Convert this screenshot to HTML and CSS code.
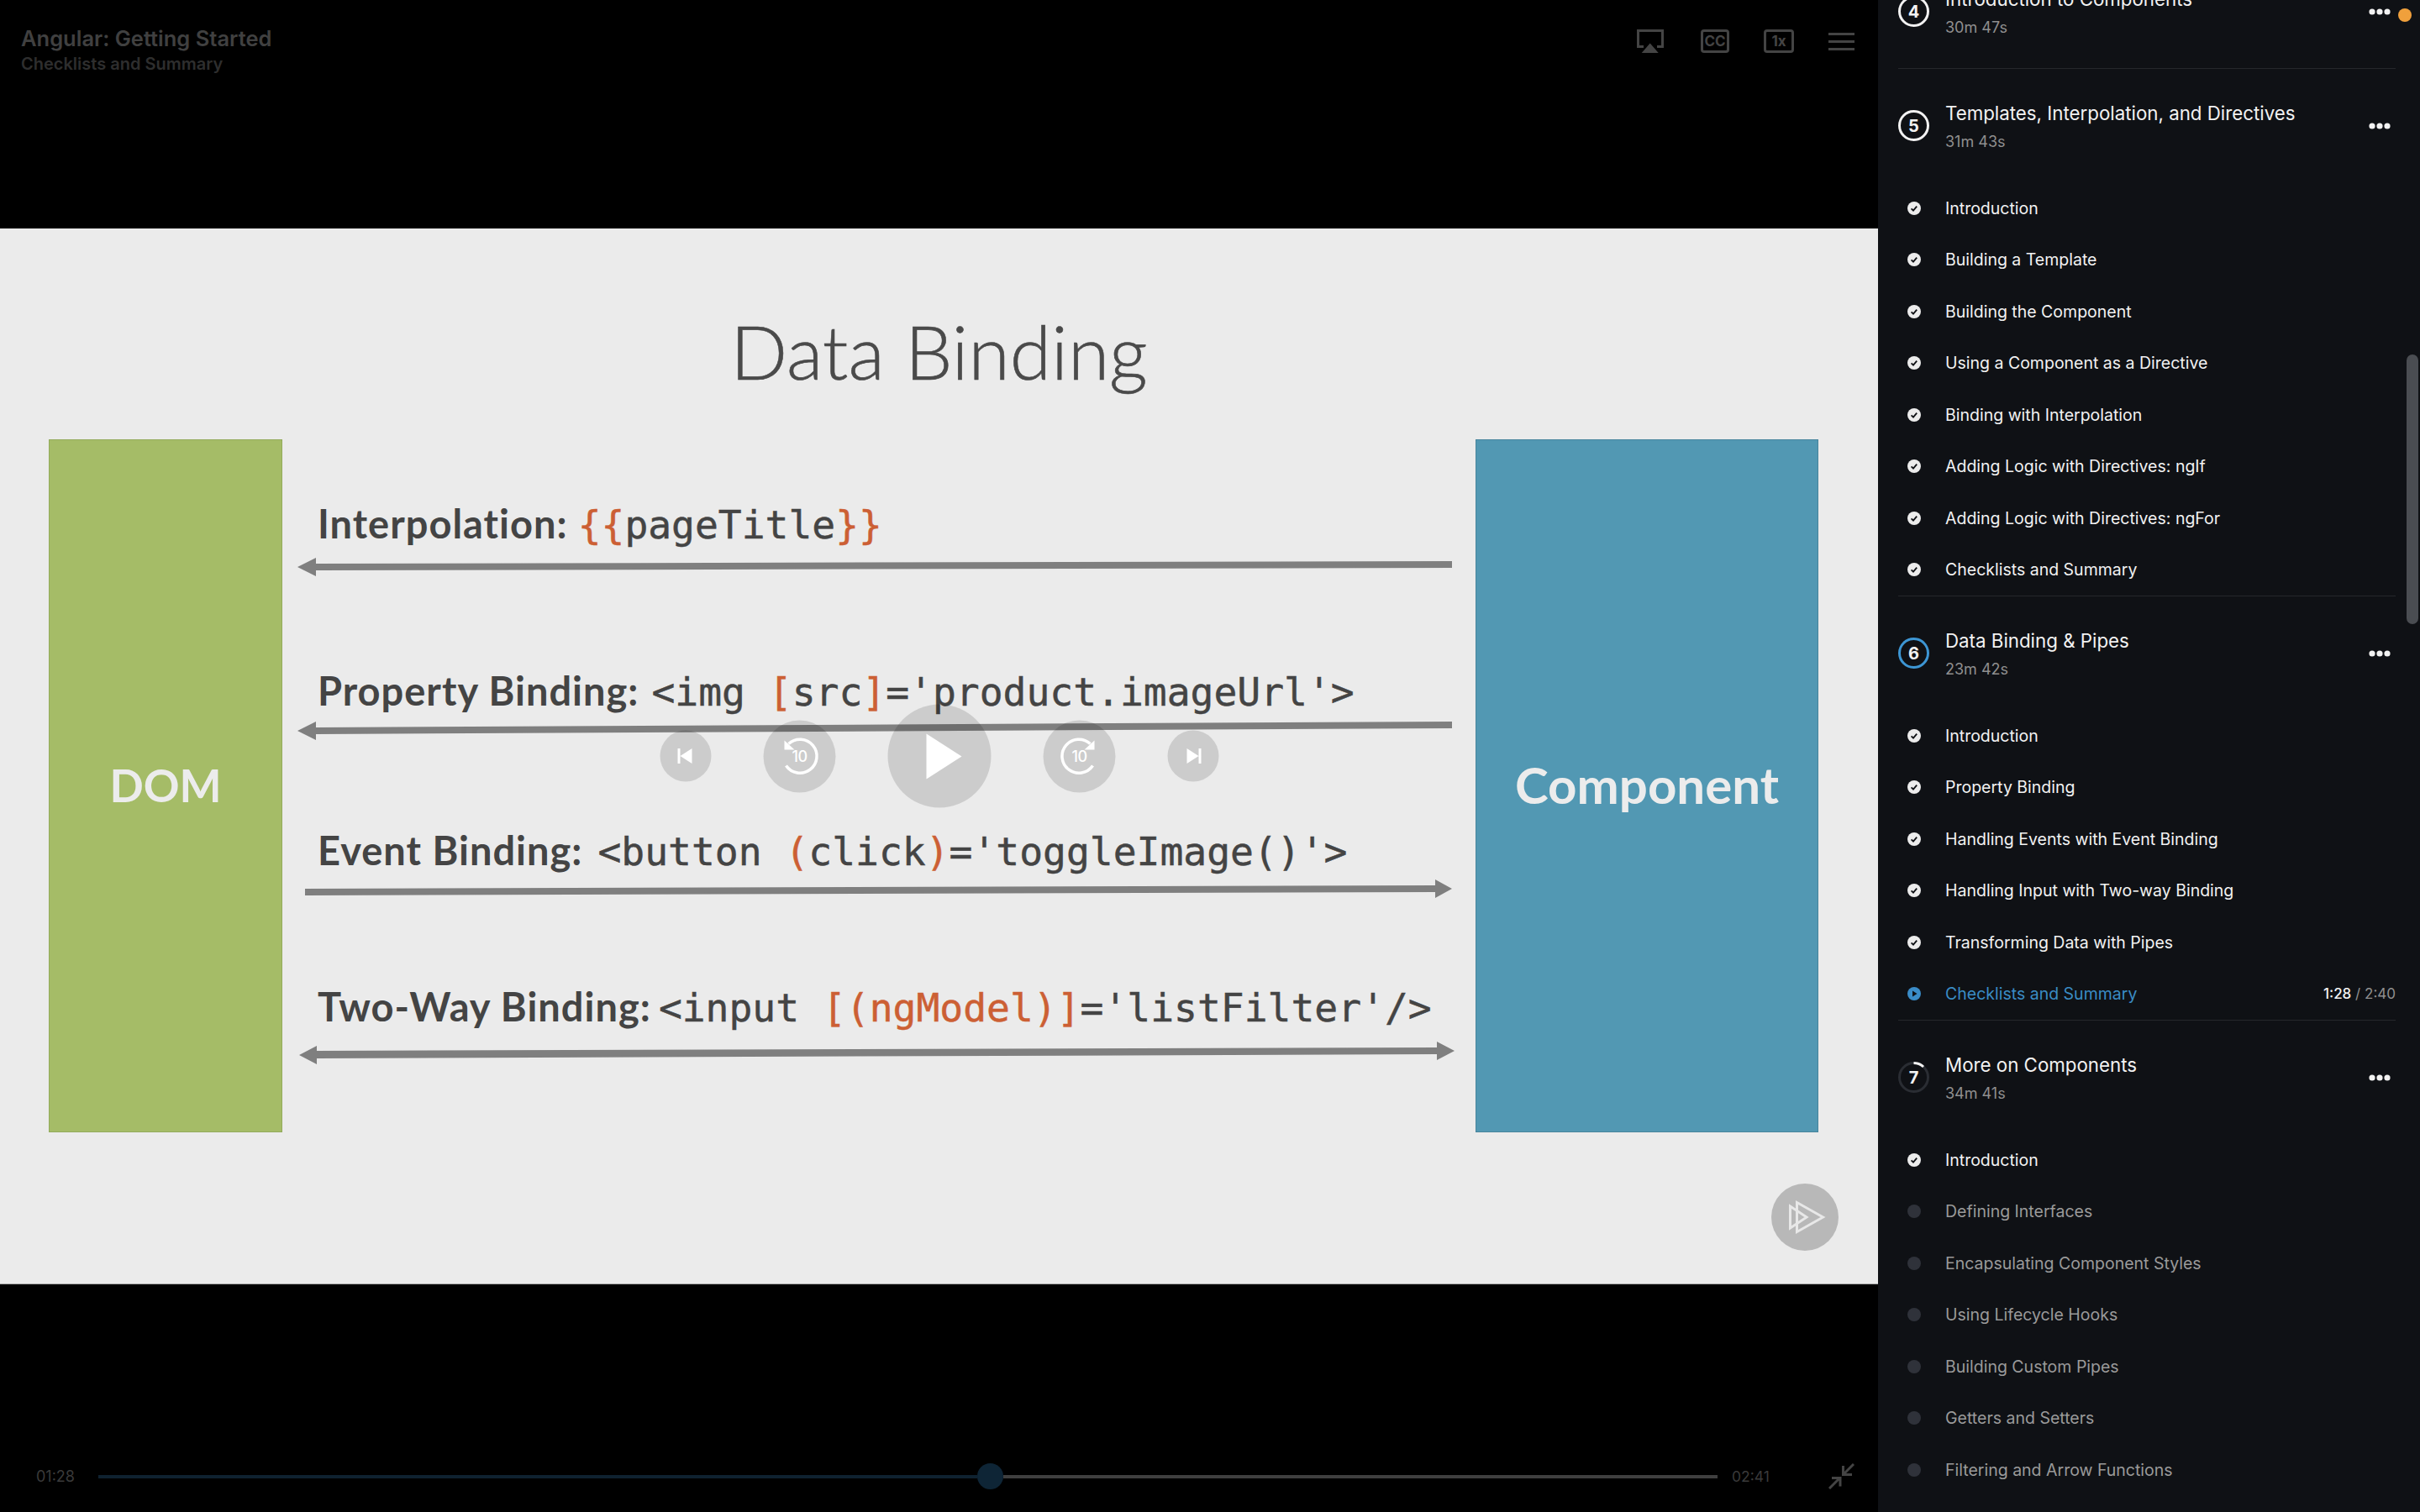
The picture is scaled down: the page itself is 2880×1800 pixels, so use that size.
FILE: index.html
```html
<!DOCTYPE html>
<html lang="en">
  <head>
    <meta charset="UTF-8" />
    <title>Angular: Getting Started</title>
    <link rel="stylesheet" href="styles.css">
  </head>
  <body>
    <svg class="defs" width="0" height="0">
      <symbol id="check" viewBox="0 0 16 16">
        <circle cx="8" cy="8" r="8" fill="#ececec" />
        <path d="M4.6 8.3l2.4 2.4 4.2-5" fill="none" stroke="#0f1115" stroke-width="1.8" />
      </symbol>
      <symbol id="more" viewBox="0 0 26 8">
        <circle cx="4" cy="4" r="3.6" fill="#f2f2f2" />
        <circle cx="13" cy="4" r="3.6" fill="#f2f2f2" />
        <circle cx="22" cy="4" r="3.6" fill="#f2f2f2" />
      </symbol>
    </svg>

    <main class="player">
      <header class="topbar">
        <div class="course">
          <div class="course-title">Angular: Getting Started</div>
          <div class="course-clip">Checklists and Summary</div>
        </div>
        <div class="top-icons">
          <svg class="airplay" width="32" height="28" viewBox="0 0 32 28">
            <path d="M8 20.5H1.5V1.5h29v19H24" fill="none" stroke="#444" stroke-width="3" />
            <path d="M5.7 28L15.7 16.5 25.7 28z" fill="#444" />
          </svg>
          <div class="box-icon box-cc">CC</div>
          <div class="box-icon box-speed">1x</div>
          <div class="burger"><span></span><span></span><span></span></div>
        </div>
      </header>

      <section class="slide">
        <h1 class="slide-title">Data Binding</h1>
        <div class="diagram">
          <div class="side side-dom">DOM</div>
          <div class="bindings">
            <p class="binding b1">Interpolation:<span class="code"><b>{{</b>pageTitle<b>}}</b></span></p>
            <p class="binding b2">Property Binding:<span class="code">&lt;img <b>[</b>src<b>]</b>='product.imageUrl'&gt;</span></p>
            <p class="binding b3">Event Binding:<span class="code">&lt;button <b>(</b>click<b>)</b>='toggleImage()'&gt;</span></p>
            <p class="binding b4">Two-Way Binding:<span class="code">&lt;input <b>[(ngModel)]</b>='listFilter'/&gt;</span></p>
            <svg class="arrows" viewBox="0 0 1420 825" width="1420" height="825">
              <g fill="#7f7f7f" stroke="none">
                <path d="M18 152L40 141V148L1392 145V153L40 156V163z" />
                <path d="M18 347L40 336V343L1392 336V344L40 351V358z" />
                <path d="M27 535L1372 531V524L1392 535L1372 546V539L27 543z" />
                <path d="M20 733L41 722V728L1374 724V717L1395 728L1374 739V732L41 737V744z" />
              </g>
            </svg>
          </div>
          <div class="side side-component">Component</div>
        </div>

        <div class="controls">
          <div class="ctrl ctrl-sm">
            <svg width="61" height="61" viewBox="0 0 61 61"><path d="M21 21.5h3v18h-3zM24 30.5L38 21.5v18z" fill="#fff" /></svg>
          </div>
          <div class="ctrl ctrl-md">
            <svg width="86" height="86" viewBox="0 0 86 86">
              <path d="M30 28A20 20 0 1 1 27 54" fill="none" stroke="#fff" stroke-width="3.5" />
              <path d="M25 24V35H37z" fill="#fff" />
              <text x="43" y="49" class="ctrl-ten">10</text>
            </svg>
          </div>
          <div class="ctrl ctrl-lg">
            <svg width="123" height="123" viewBox="0 0 123 123"><path d="M46 35L88 62 46 89z" fill="#fff" /></svg>
          </div>
          <div class="ctrl ctrl-md">
            <svg width="86" height="86" viewBox="0 0 86 86">
              <path d="M56 28A20 20 0 1 0 59 54" fill="none" stroke="#fff" stroke-width="3.5" />
              <path d="M61 24V35H49z" fill="#fff" />
              <text x="43" y="49" class="ctrl-ten">10</text>
            </svg>
          </div>
          <div class="ctrl ctrl-sm">
            <svg width="61" height="61" viewBox="0 0 61 61"><path d="M37 21.5h3v18h-3zM37 30.5L23 21.5v18z" fill="#fff" /></svg>
          </div>
        </div>

        <svg class="logo" width="80" height="80" viewBox="0 0 80 80">
          <circle cx="40" cy="40" r="40" fill="#b8b8b8" />
          <g fill="none" stroke="#e8e8e8" stroke-width="3">
            <path d="M22.5 27V53L42 40z" />
            <path d="M30.5 22.5V57.5L61.5 40z" />
          </g>
        </svg>
      </section>

      <footer class="bottombar">
        <span class="time time-now">01:28</span>
        <div class="progress">
          <div class="progress-done"></div>
          <div class="progress-knob"></div>
          <div class="progress-rest"></div>
        </div>
        <span class="time time-total">02:41</span>
        <svg class="compress" width="31" height="31" viewBox="0 0 31 31">
          <path d="M1 30L13 18M4 17.500h10v10M30 1L18 13M17.500 3v10.500H28" fill="none" stroke="#444" stroke-width="3" />
        </svg>
      </footer>
    </main>

    <aside class="sidebar">
      <div class="scroll-thumb"></div>
      <div class="notify-dot"></div>
      <div class="modules">

        <section class="module">
          <div class="module-head">
            <div class="badge">4</div>
            <div class="module-text">
              <div class="module-name">Introduction to Components</div>
              <div class="module-time">30m 47s</div>
            </div>
            <svg class="more" width="26" height="8"><use href="#more" /></svg>
          </div>
        </section>

        <section class="module">
          <div class="module-head">
            <div class="badge">5</div>
            <div class="module-text">
              <div class="module-name">Templates, Interpolation, and Directives</div>
              <div class="module-time">31m 43s</div>
            </div>
            <svg class="more" width="26" height="8"><use href="#more" /></svg>
          </div>
          <ul class="clips">
            <li class="clip"><span class="clip-icon"><svg width="16" height="16"><use href="#check" /></svg></span>Introduction</li>
            <li class="clip"><span class="clip-icon"><svg width="16" height="16"><use href="#check" /></svg></span>Building a Template</li>
            <li class="clip"><span class="clip-icon"><svg width="16" height="16"><use href="#check" /></svg></span>Building the Component</li>
            <li class="clip"><span class="clip-icon"><svg width="16" height="16"><use href="#check" /></svg></span>Using a Component as a Directive</li>
            <li class="clip"><span class="clip-icon"><svg width="16" height="16"><use href="#check" /></svg></span>Binding with Interpolation</li>
            <li class="clip"><span class="clip-icon"><svg width="16" height="16"><use href="#check" /></svg></span>Adding Logic with Directives: ngIf</li>
            <li class="clip"><span class="clip-icon"><svg width="16" height="16"><use href="#check" /></svg></span>Adding Logic with Directives: ngFor</li>
            <li class="clip"><span class="clip-icon"><svg width="16" height="16"><use href="#check" /></svg></span>Checklists and Summary</li>
          </ul>
        </section>

        <section class="module">
          <div class="module-head">
            <div class="badge badge-active">6</div>
            <div class="module-text">
              <div class="module-name">Data Binding &amp; Pipes</div>
              <div class="module-time">23m 42s</div>
            </div>
            <svg class="more" width="26" height="8"><use href="#more" /></svg>
          </div>
          <ul class="clips">
            <li class="clip"><span class="clip-icon"><svg width="16" height="16"><use href="#check" /></svg></span>Introduction</li>
            <li class="clip"><span class="clip-icon"><svg width="16" height="16"><use href="#check" /></svg></span>Property Binding</li>
            <li class="clip"><span class="clip-icon"><svg width="16" height="16"><use href="#check" /></svg></span>Handling Events with Event Binding</li>
            <li class="clip"><span class="clip-icon"><svg width="16" height="16"><use href="#check" /></svg></span>Handling Input with Two-way Binding</li>
            <li class="clip"><span class="clip-icon"><svg width="16" height="16"><use href="#check" /></svg></span>Transforming Data with Pipes</li>
            <li class="clip clip-active">
              <span class="clip-icon">
                <svg width="16" height="16" viewBox="0 0 16 16">
                  <circle cx="8" cy="8" r="8" fill="#3a8cc8" />
                  <path d="M6 4.500L11.500 8 6 11.500z" fill="#0f1115" />
                </svg>
              </span>
              Checklists and Summary
              <span class="clip-progress"><b>1:28</b> / 2:40</span>
            </li>
          </ul>
        </section>

        <section class="module">
          <div class="module-head">
            <div class="badge badge-partial">
              <svg width="37" height="37" viewBox="0 0 37 37">
                <circle cx="18.500" cy="18.500" r="17" fill="none" stroke="#2a2d33" stroke-width="3" />
                <path d="M18.500 1.500A17 17 0 0 1 30 6" fill="none" stroke="#f2f2f2" stroke-width="3" />
              </svg>
              <span>7</span>
            </div>
            <div class="module-text">
              <div class="module-name">More on Components</div>
              <div class="module-time">34m 41s</div>
            </div>
            <svg class="more" width="26" height="8"><use href="#more" /></svg>
          </div>
          <ul class="clips">
            <li class="clip"><span class="clip-icon"><svg width="16" height="16"><use href="#check" /></svg></span>Introduction</li>
            <li class="clip clip-todo"><span class="clip-icon"><i class="todo-dot"></i></span>Defining Interfaces</li>
            <li class="clip clip-todo"><span class="clip-icon"><i class="todo-dot"></i></span>Encapsulating Component Styles</li>
            <li class="clip clip-todo"><span class="clip-icon"><i class="todo-dot"></i></span>Using Lifecycle Hooks</li>
            <li class="clip clip-todo"><span class="clip-icon"><i class="todo-dot"></i></span>Building Custom Pipes</li>
            <li class="clip clip-todo"><span class="clip-icon"><i class="todo-dot"></i></span>Getters and Setters</li>
            <li class="clip clip-todo"><span class="clip-icon"><i class="todo-dot"></i></span>Filtering and Arrow Functions</li>
          </ul>
        </section>

      </div>
    </aside>
  </body>
</html>
```

FILE: styles.css
```css
* {
  box-sizing: border-box;
}

html,
body {
  margin: 0;
  height: 1800px;
  overflow: hidden;
}

body {
  display: flex;
  background-color: #000;
  font-family: Inter, "Liberation Sans", sans-serif;
  color: #f2f2f2;
}

.defs {
  position: absolute;
}

/* player column */
.player {
  width: 2235px;
  height: 1800px;
  display: flex;
  flex-direction: column;
}

.topbar {
  height: 272px;
  padding: 30px 28px 0 25px;
  display: flex;
  justify-content: space-between;
  align-items: flex-start;
}

.course-title {
  font-size: 25.5px;
  line-height: 32px;
  font-weight: 600;
  color: #404040;
}

.course-clip {
  font-size: 20px;
  line-height: 28px;
  font-weight: 600;
  color: #2e2e2e;
}

.top-icons {
  padding-top: 5px;
  display: flex;
  align-items: center;
  gap: 41px;
}

.airplay {
  margin-right: 3px;
}

.box-icon {
  height: 28px;
  border: 3px solid #444;
  border-radius: 4px;
  display: flex;
  align-items: center;
  justify-content: center;
  font-size: 17px;
  font-weight: 700;
  color: #444;
}

.box-cc {
  width: 34px;
}

.box-speed {
  width: 36px;
}

.burger {
  width: 31px;
  display: flex;
  flex-direction: column;
  gap: 6px;
}

.burger span {
  height: 3px;
  background-color: #444;
}

/* slide */
.slide {
  position: relative;
  height: 1257px;
  background-color: #ebebeb;
  border-bottom: 1px solid #a8a8a8;
  padding: 0 71px 0 58px;
}

.slide-title {
  margin: 0;
  height: 251px;
  padding: 96px 0 0 13px;
  text-align: center;
  font-family: Lato, sans-serif;
  font-size: 89.5px;
  line-height: 100px;
  font-weight: 300;
  -webkit-text-stroke: 0.6px #4a4a4a;
  color: #4a4a4a;
}

.diagram {
  height: 825px;
  display: flex;
}

.side {
  padding-bottom: 3px;
  display: flex;
  align-items: center;
  justify-content: center;
  font-family: Lato, sans-serif;
  font-weight: 700;
  color: #ececec;
}

.side-dom {
  width: 278px;
  background-color: #a5bc67;
  border: 1px solid #93ab5c;
  font-size: 53px;
}

.side-component {
  width: 408px;
  background-color: #5298b3;
  border: 1px solid #47849c;
  font-size: 60px;
}

.bindings {
  position: relative;
  width: 1420px;
  padding-left: 42px;
}

.binding {
  margin: 0;
  height: 60px;
  line-height: 60px;
  white-space: nowrap;
  font-family: Lato, sans-serif;
  font-size: 47px;
  letter-spacing: 1px;
  font-weight: 700;
  color: #444;
}

.b1 {
  margin-top: 70px;
}

.b2 {
  margin-top: 139px;
}

.b3 {
  margin-top: 130px;
}

.b4 {
  margin-top: 126px;
}

.code {
  margin-left: 12px;
  font-family: "DejaVu Sans Mono", monospace;
  font-size: 46.3px;
  letter-spacing: 0;
  font-weight: 400;
  -webkit-text-stroke: 0.5px currentColor;
}

.b2 .code {
  margin-left: 15px;
}

.b3 .code {
  margin-left: 18px;
}

.b4 .code {
  margin-left: 9px;
}

.code b {
  font-weight: 400;
  color: #cc5f34;
}

.arrows {
  position: absolute;
  top: 0;
  left: 0;
}

/* transport buttons sit over the slide */
.controls {
  position: absolute;
  top: 50%;
  left: 50%;
  transform: translate(-50%, -50%);
  display: flex;
  align-items: center;
  gap: 62px;
}

.ctrl {
  border-radius: 50%;
  background-color: rgba(0, 0, 0, 0.13);
}

.ctrl svg {
  display: block;
}

.ctrl-sm {
  width: 61px;
  height: 61px;
}

.ctrl-md {
  width: 86px;
  height: 86px;
}

.ctrl-lg {
  width: 123px;
  height: 123px;
}

.ctrl-ten {
  font-family: Inter, sans-serif;
  font-size: 18px;
  font-weight: 500;
  letter-spacing: -0.5px;
  fill: #fff;
  text-anchor: middle;
}

.logo {
  position: absolute;
  top: 1137px;
  left: 2108px;
}

/* progress row */
.bottombar {
  height: 271px;
  padding: 0 28px 27px 43px;
  display: flex;
  align-items: flex-end;
}

.bottombar > * {
  flex-shrink: 0;
}

.time {
  height: 31px;
  line-height: 31px;
  font-size: 18px;
  color: #3a3a3a;
}

.time-now {
  width: 74px;
}

.time-total {
  width: 132px;
  padding-left: 17px;
  font-size: 17.5px;
}

.progress {
  width: 1927px;
  height: 31px;
  display: flex;
  align-items: center;
}

.progress-done {
  width: 1046px;
  height: 4px;
  background-color: #0f2230;
}

.progress-knob {
  width: 31px;
  height: 31px;
  border-radius: 50%;
  background-color: #0e2536;
}

.progress-rest {
  flex: 1;
  height: 4px;
  background-color: #3f3f3f;
}

/* sidebar */
.sidebar {
  position: relative;
  width: 645px;
  height: 1800px;
  overflow: hidden;
  background-color: #0f1115;
}

.scroll-thumb {
  position: absolute;
  top: 422px;
  left: 629px;
  width: 14px;
  height: 321px;
  border-radius: 7px;
  background-color: #4a4d52;
}

.notify-dot {
  position: absolute;
  top: 10px;
  left: 619px;
  width: 16px;
  height: 16px;
  border-radius: 50%;
  background-color: #f0a03c;
}

.modules {
  margin-top: -54px;
  padding: 0 29px 0 24px;
}

.module {
  border-bottom: 1px solid #25272c;
}

.module:last-child {
  border-bottom: none;
}

.module-head {
  height: 135px;
  display: flex;
  align-items: center;
  gap: 19px;
}

.badge {
  position: relative;
  flex-shrink: 0;
  width: 37px;
  height: 37px;
  border: 3px solid #f2f2f2;
  border-radius: 50%;
  display: flex;
  align-items: center;
  justify-content: center;
  font-size: 20px;
  font-weight: 700;
}

.badge-active {
  border-color: #3d96d4;
}

.badge-partial {
  border: none;
}

.badge-partial svg {
  position: absolute;
  top: 0;
  left: 0;
}

.module-text {
  flex: 1;
  padding-top: 5px;
}

.module-name {
  font-size: 22.3px;
  line-height: 34px;
}

.module-time {
  font-size: 18px;
  line-height: 34px;
  color: #8f8f8f;
}

.more {
  margin-right: 6px;
}

.clips {
  margin: 0;
  padding: 0;
  list-style: none;
}

.clip {
  height: 61.5px;
  display: flex;
  align-items: center;
  gap: 19px;
  font-size: 19.5px;
}

.clip-icon {
  flex-shrink: 0;
  width: 37px;
  display: flex;
  justify-content: center;
}

.clip-active {
  color: #3a8cc4;
}

.clip-todo {
  color: #9a9a9a;
}

.todo-dot {
  width: 16px;
  height: 16px;
  border-radius: 50%;
  background-color: #2f323a;
}

.clip-progress {
  margin-left: auto;
  font-size: 17px;
  color: #8f8f8f;
}

.clip-progress b {
  font-weight: 500;
  color: #f2f2f2;
}
```
